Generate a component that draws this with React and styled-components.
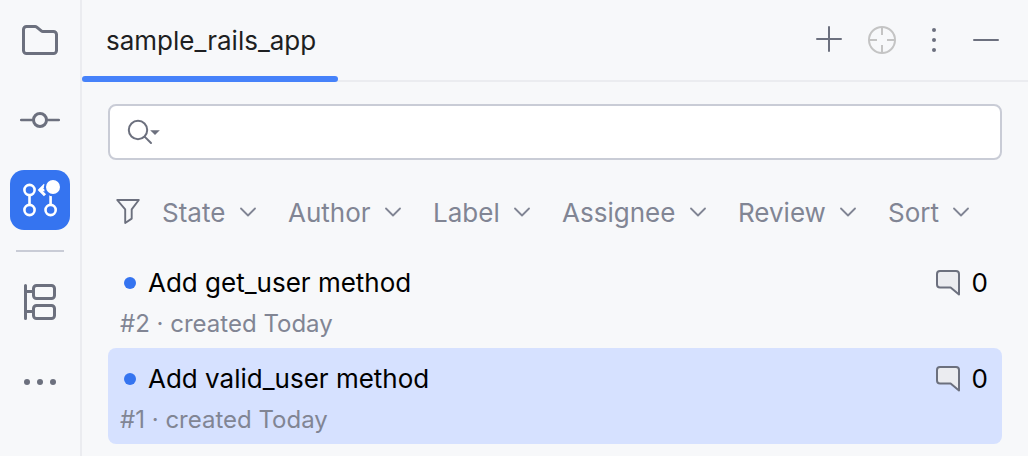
import { useState } from "react"
import styled, { createGlobalStyle } from "styled-components"

var filters = ["State", "Author", "Label", "Assignee", "Review", "Sort"]

var pullRequests = [
  { number: 2, title: "Add get_user method", created: "Today", comments: 0 },
  { number: 1, title: "Add valid_user method", created: "Today", comments: 0 },
]

var FolderIcon = () => (
  <Icon viewBox="0 0 40 40" strokeWidth="3">
    <path d="M3.5 9.5a3 3 0 0 1 3-3h8.6q.9 0 1.6.6l4.6 3.8q.7.6 1.6.6h10.6a3 3 0 0 1 3 3v16a3 3 0 0 1-3 3h-27a3 3 0 0 1-3-3z" />
  </Icon>
)

var CommitIcon = () => (
  <Icon viewBox="0 0 40 40" strokeWidth="3">
    <circle cx="20" cy="20" r="6.5" />
    <path d="M1.2 20H13.5M26.5 20H38.8" strokeWidth="2.5" />
  </Icon>
)

var PullRequestIcon = () => (
  <Icon viewBox="0 0 40 40" strokeWidth="2.6">
    <circle cx="9.5" cy="10" r="5.1" />
    <circle cx="9.5" cy="30" r="5.1" />
    <circle cx="30.6" cy="30" r="5.1" />
    <path d="M9.5 15V25M19 10H27a3.6 3.6 0 0 1 3.6 3.6V25" strokeLinecap="butt" />
    <path d="M25 4.8L19.8 10L25 15.2" strokeWidth="3" strokeLinecap="butt" strokeLinejoin="miter" />
    <circle cx="33" cy="7" r="9.2" fill="#3574f0" stroke="none" />
    <circle cx="33" cy="7" r="7" fill="currentColor" stroke="none" />
  </Icon>
)

var StructureIcon = () => (
  <Icon viewBox="0 0 40 40" strokeWidth="3">
    <path d="M5.5 3.5V36.5M5.5 9.5H13.5M5.5 29.5H13.5" />
    <rect x="13.5" y="3.5" width="21" height="13" rx="3" />
    <rect x="13.5" y="23.5" width="21" height="13" rx="3" />
  </Icon>
)

var MoreIcon = () => (
  <Icon viewBox="0 0 40 40" fill="currentColor" stroke="none">
    <circle cx="7" cy="20" r="3" />
    <circle cx="20" cy="20" r="3" />
    <circle cx="33" cy="20" r="3" />
  </Icon>
)

var PlusIcon = () => (
  <Icon viewBox="0 0 40 40">
    <path d="M7 19H31M19 7V31" />
  </Icon>
)

var TargetIcon = () => (
  <Icon viewBox="0 0 40 40">
    <circle cx="20" cy="20" r="13" />
    <path d="M20 7V15M20 33V25M7 20H15M33 20H25" strokeLinecap="butt" />
  </Icon>
)

var KebabIcon = () => (
  <Icon viewBox="0 0 40 40" fill="currentColor" stroke="none">
    <circle cx="20" cy="10" r="2" />
    <circle cx="20" cy="20" r="2" />
    <circle cx="20" cy="30" r="2" />
  </Icon>
)

var MinusIcon = () => (
  <Icon viewBox="0 0 40 40">
    <path d="M8 20H32" />
  </Icon>
)

var SearchIcon = () => (
  <Icon viewBox="0 0 36 32" $width={36} $height={32}>
    <circle cx="12" cy="14" r="9.2" />
    <path d="M18.6 20.6L25 27" />
    <path d="M24.2 14.2H33.8L29 19z" fill="currentColor" stroke="none" />
  </Icon>
)

var FunnelIcon = () => (
  <Icon viewBox="0 0 28 28" $width={28} $height={28} role="img" aria-label="Filters">
    <path d="M3.2 2H24.8L17.7 11.4V20.6L11.2 25V11.4z" strokeWidth="1.9" />
  </Icon>
)

var ChevronIcon = () => (
  <Icon viewBox="0 0 16 10" $width={16} $height={10}>
    <path d="M1 1.5L8 8.5L15 1.5" strokeWidth="1.8" />
  </Icon>
)

var CommentIcon = () => (
  <Icon viewBox="0 0 26 28" $width={26} $height={28}>
    <path d="M2 5a3 3 0 0 1 3-3H21a3 3 0 0 1 3 3V25.5L15.6 18.5H5a3 3 0 0 1-3-3z" fill="#ebecf0" />
  </Icon>
)

var PullRequest = ({ request, selected, onSelect }) => (
  <Row role="option" aria-selected={selected} $selected={selected} onClick={onSelect}>
    <Line>
      <Dot />
      <Title>{request.title}</Title>
      <Comments>
        <CommentIcon />
        {request.comments}
      </Comments>
    </Line>
    <Meta>#{request.number} · created {request.created}</Meta>
  </Row>
)

var App = () => {
  var [selected, setSelected] = useState(1)

  return (
    <Page>
      <GlobalStyle />
      <Sidebar>
        <ToolButton aria-label="Project"><FolderIcon /></ToolButton>
        <ToolButton aria-label="Commit"><CommitIcon /></ToolButton>
        <ToolButton aria-label="Pull Requests" $active><PullRequestIcon /></ToolButton>
        <Separator />
        <ToolButton aria-label="Structure"><StructureIcon /></ToolButton>
        <ToolButton aria-label="More"><MoreIcon /></ToolButton>
      </Sidebar>

      <Main>
        <Header>
          <Tab role="tab" aria-selected="true">
            <TabLabel>sample_rails_app</TabLabel>
            <Underline />
          </Tab>
          <Actions>
            <ActionButton aria-label="New pull request"><PlusIcon /></ActionButton>
            <ActionButton aria-label="Select opened" disabled><TargetIcon /></ActionButton>
            <ActionButton aria-label="Options"><KebabIcon /></ActionButton>
            <ActionButton aria-label="Hide"><MinusIcon /></ActionButton>
          </Actions>
        </Header>

        <Content>
          <SearchBox>
            <SearchIcon />
            <SearchInput type="text" aria-label="Search pull requests" />
          </SearchBox>

          <Filters>
            <FunnelIcon />
            {filters.map((name) => (
              <Filter key={name}>
                <FilterSelect aria-label={name}>
                  <option>{name}</option>
                </FilterSelect>
                <ChevronIcon />
              </Filter>
            ))}
          </Filters>

          <List role="listbox" aria-label="Pull requests">
            {pullRequests.map((request) => (
              <PullRequest
                key={request.number}
                request={request}
                selected={request.number === selected}
                onSelect={() => setSelected(request.number)}
              />
            ))}
          </List>
        </Content>
      </Main>
    </Page>
  )
}

var GlobalStyle = createGlobalStyle`
* { box-sizing: border-box; }

body {
margin: 0;
background: #f7f8fa;
color: #000;
font: 26px/40px Inter, sans-serif;
}

button, input, select {
margin: 0;
padding: 0;
border: 0;
background: none;
color: inherit;
font: inherit;
}
`

var Page = styled.div`
display: flex;
min-height: 100vh;
`

var Icon = styled.svg.attrs((props) => ({
  fill: props.fill || "none",
  stroke: props.stroke || "currentColor",
  strokeWidth: props.strokeWidth || 2,
  strokeLinecap: "round",
  strokeLinejoin: "round",
}))`
display: block;
flex: none;
width: ${(props) => props.$width || 40}px;
height: ${(props) => props.$height || 40}px;
`

var Sidebar = styled.nav`
display: flex;
flex: none;
flex-direction: column;
align-items: center;
gap: 20px;
padding: 10px;
border-right: 2px solid #ebecf0;
`

var ToolButton = styled.button`
display: grid;
place-items: center;
width: 60px;
height: 60px;
border-radius: 14px;
background: ${(props) => props.$active ? "#3574f0" : "none"};
color: ${(props) => props.$active ? "#fff" : "#6c707e"};
`

var Separator = styled.hr`
width: 48px;
height: 2px;
margin: 0;
border: 0;
background: #c9ccd6;
`

var Main = styled.main`
flex: 1;
min-width: 0;
`

var Header = styled.header`
display: flex;
justify-content: space-between;
height: 82px;
box-shadow: inset 0 -2px #ebecf0;
`

var Tab = styled.button`
display: flex;
flex-direction: column;
color: #1e1f22;
`

var TabLabel = styled.span`
flex: 1;
padding: 21px 22px 0 24px;
`

var Underline = styled.span`
align-self: stretch;
height: 6px;
border-radius: 3px;
background: #4682fa;
`

var Actions = styled.div`
display: flex;
align-items: center;
gap: 12px;
padding: 0 22px 2px 0;
`

var ActionButton = styled.button`
color: #6c707e;

&:disabled { color: #c4c4c4; }
`

var Content = styled.div`
padding: 22px 26px 12px;
`

var SearchBox = styled.label`
display: flex;
align-items: center;
height: 56px;
padding: 0 16px;
border: 2px solid #c9ccd6;
border-radius: 8px;
background: #fff;
color: #6c707e;
`

var SearchInput = styled.input`
flex: 1;
min-width: 0;
margin-left: 8px;
outline: none;
color: #000;
`

var Filters = styled.div`
display: flex;
align-items: center;
gap: 32px;
margin: 32px 0 20px;
padding-left: 6px;
color: #818594;

> svg {
margin-right: -12px;
color: #6c707e;
}
`

var Filter = styled.div`
display: flex;
align-items: center;
gap: 14px;
`

var FilterSelect = styled.select`
appearance: none;
height: 40px;
padding-top: 1px;
`

var List = styled.ul`
margin: 0;
padding: 0;
list-style: none;
`

var Row = styled.li`
padding: 11px 14px 3px 12px;
border-radius: 8px;
background: ${(props) => props.$selected ? "#d6e1ff" : "none"};
`

var Line = styled.div`
display: flex;
align-items: center;
`

var Dot = styled.span`
width: 12px;
height: 12px;
margin: 0 12px 0 4px;
border-radius: 50%;
background: #3574f0;
`

var Title = styled.span`
flex: 1;
`

var Comments = styled.span`
display: flex;
align-items: center;
gap: 11px;

svg { color: #6c707e; }
`

var Meta = styled.div`
color: #818594;
font-size: 24px;
line-height: 42px;
`

export default App
